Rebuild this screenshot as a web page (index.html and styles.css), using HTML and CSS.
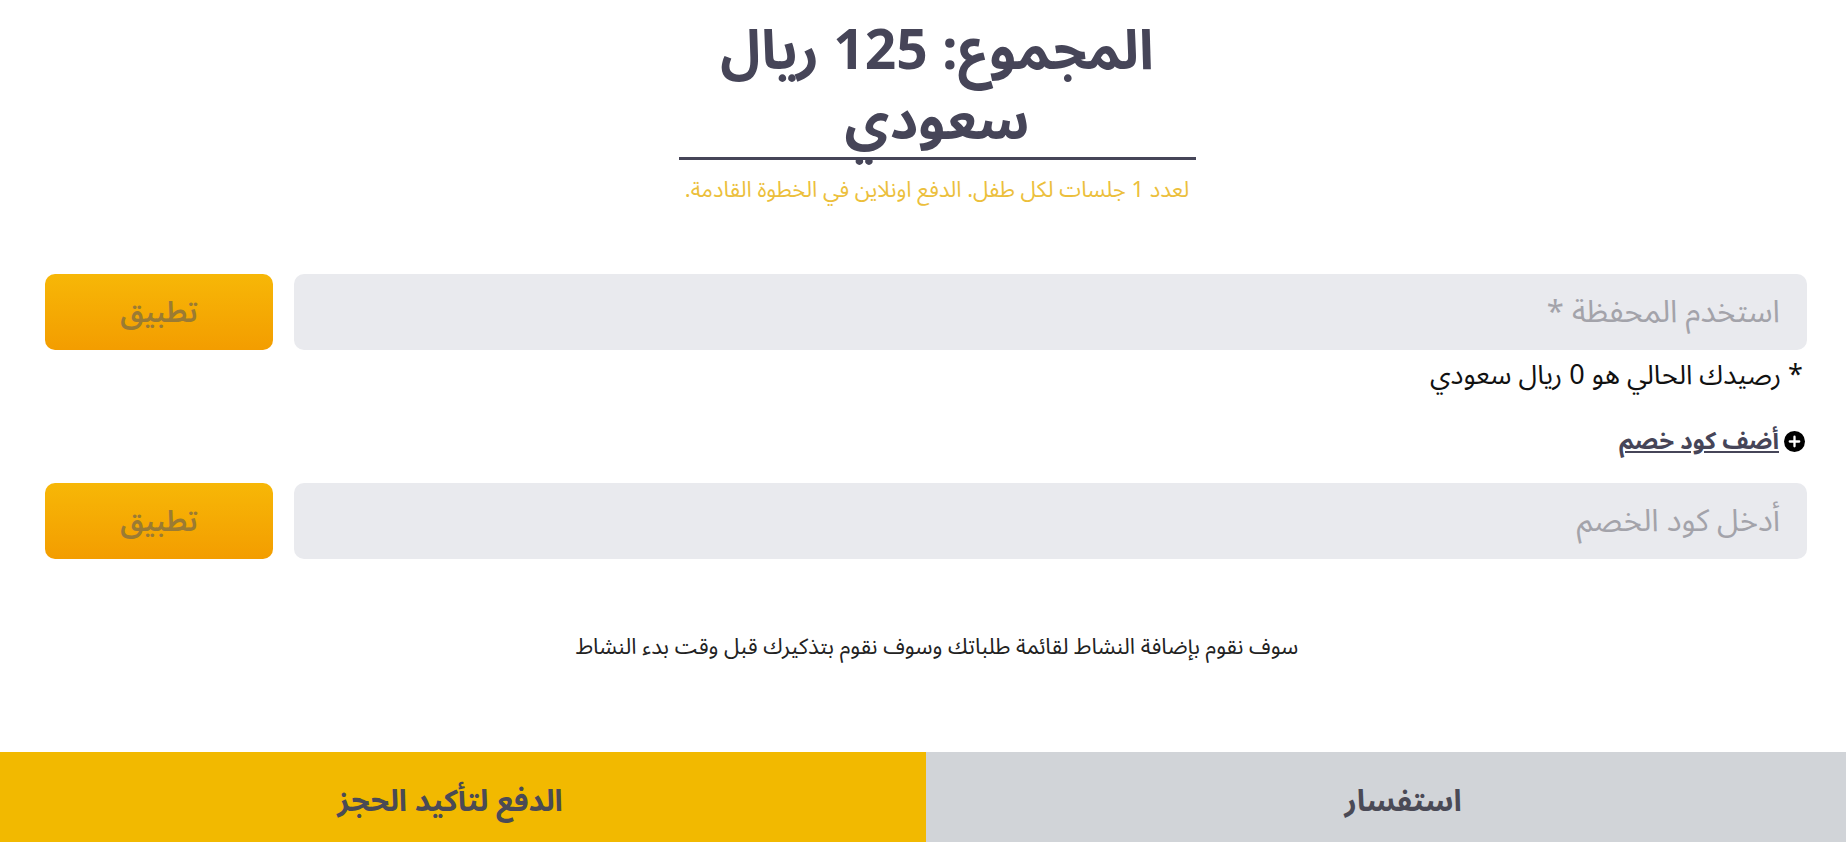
FILE: index.html
```html
<!DOCTYPE html>
<html lang="ar" dir="rtl">
<head>
    <meta charset="UTF-8">
    <meta name="viewport" content="width=device-width, initial-scale=1.0">
    <title>الدفع</title>
    <link rel="stylesheet" href="styles.css">
</head>
<body>
    <div class="checkout">
        <div class="summary">
            <h1 class="total">المجموع: 125 ريال سعودي</h1>
            <p class="total-note">لعدد 1 جلسات لكل طفل. الدفع اونلاين في الخطوة القادمة.</p>
        </div>

        <div class="apply-row wallet-row">
            <input type="text" class="field" placeholder="استخدم المحفظة *">
            <button class="apply-btn">تطبيق</button>
        </div>
        <p class="balance">* رصيدك الحالي هو 0 ريال سعودي</p>

        <a href="#" class="add-coupon">
            <svg class="plus-icon" viewBox="0 0 20 20" width="21" height="21">
                <circle cx="10" cy="10" r="10" fill="#000"/>
                <path d="M10 5.5v9M5.5 10h9" stroke="#fff" stroke-width="2.2" stroke-linecap="round"/>
            </svg>
            <span>أضف كود خصم</span>
        </a>

        <div class="apply-row">
            <input type="text" class="field" placeholder="أدخل كود الخصم">
            <button class="apply-btn">تطبيق</button>
        </div>

        <p class="notice">سوف نقوم بإضافة النشاط لقائمة طلباتك وسوف نقوم بتذكيرك قبل وقت بدء النشاط</p>
    </div>

    <div class="action-bar">
        <button class="action ask">استفسار</button>
        <button class="action pay">الدفع لتأكيد الحجز</button>
    </div>
</body>
</html>
```

FILE: styles.css
```css
:root {
    --dark-text: #464558;
    --yellow: #f2b900;
    --field-bg: #e9eaee;
    --grey-bar: #d1d4d8;
}

body {
    margin: 0;
    padding: 0;
    font-family: "Noto Sans Arabic", "DejaVu Sans", sans-serif;
    background-color: #fff;
    color: #222;
}

.checkout {
    padding: 0 39px 0 45px;
}

/* centered blocks sit slightly right of the page middle */
.summary,
.notice {
    padding-left: 22px;
}

.summary {
    text-align: center;
    padding-top: 17px;
}

.total {
    width: 517px;
    margin: 0 auto;
    padding-bottom: 0;
    border-bottom: 3px solid var(--dark-text);
    font-size: 55px;
    line-height: 70px;
    font-weight: bold;
    color: var(--dark-text);
}

.total-note {
    margin: 15px 0 0;
    font-size: 22px;
    line-height: 30px;
    color: #ecbf3c;
}

.apply-row {
    display: flex;
    gap: 21px;
    height: 76px;
}

.wallet-row {
    margin-top: 69px;
}

.field {
    flex: 1;
    border: none;
    border-radius: 10px;
    background-color: var(--field-bg);
    padding: 0 27px;
    font-family: inherit;
    font-size: 31px;
    color: #333;
    outline: none;
}

.field::placeholder {
    color: #a3a3aa;
}

.apply-btn {
    width: 228px;
    border: none;
    border-radius: 10px;
    background: linear-gradient(to bottom, #f7b707, #f39d00);
    font-family: inherit;
    font-size: 29px;
    font-weight: 600;
    color: #9b7b33;
    cursor: pointer;
}

.balance {
    margin: 8px 4px 0 0;
    font-size: 27px;
    line-height: 36px;
    color: #111;
}

.add-coupon {
    display: inline-flex;
    align-items: center;
    gap: 5px;
    margin: 29px 2px 24px 0;
    height: 36px;
    font-size: 24px;
    font-weight: bold;
    color: var(--dark-text);
}

.plus-icon {
    flex-shrink: 0;
}

.notice {
    margin: 73px 0 0;
    text-align: center;
    font-size: 22px;
    line-height: 30px;
    color: #222;
}

.action-bar {
    display: flex;
    margin-top: 90px;
    height: 98px;
}

.action {
    box-sizing: border-box;
    border: none;
    font-family: inherit;
    font-size: 30px;
    font-weight: bold;
    color: #4a4a56;
    cursor: pointer;
}

.pay {
    flex: 0 0 926px;
    padding-right: 32px;
    background-color: var(--yellow);
}

.ask {
    flex: 1 1 0;
    padding-left: 40px;
    background-color: var(--grey-bar);
}
```
